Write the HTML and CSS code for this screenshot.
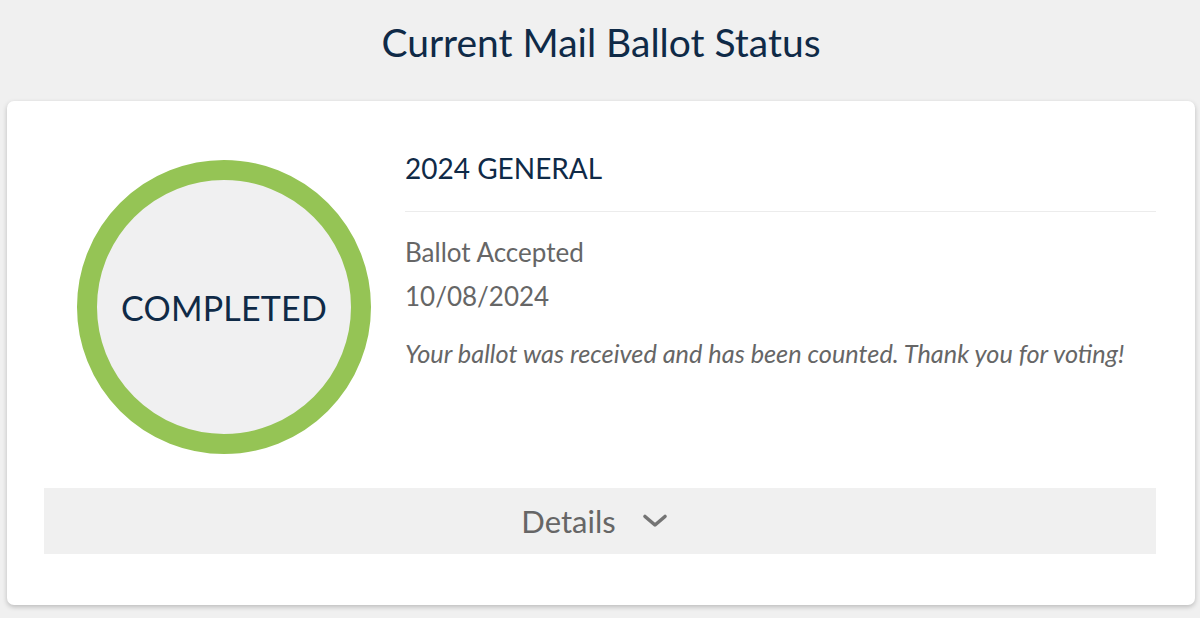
FILE: index.html
```html
<!DOCTYPE html>
<html lang="en">
<head>
<meta charset="utf-8">
<title>Current Mail Ballot Status</title>
<link rel="stylesheet" href="styles.css">
</head>
<body>
<main class="page">
  <h1 class="page-title">Current Mail Ballot Status</h1>
  <section class="card">
    <div class="status-row">
      <div class="status-ring">
        <span class="status-label">COMPLETED</span>
      </div>
      <div class="status-info">
        <h2 class="election-name">2024 GENERAL</h2>
        <hr class="divider">
        <p class="status-name">Ballot Accepted</p>
        <p class="status-date">10/08/2024</p>
        <p class="status-message">Your ballot was received and has been counted. Thank you for voting!</p>
      </div>
    </div>
    <button class="details-bar" type="button">
      <span class="details-text">Details</span>
      <svg class="chevron" width="28" height="16" viewBox="0 0 28 16" aria-hidden="true">
        <path d="M4 3.5 L14 12 L24 3.5" fill="none" stroke="#747474" stroke-width="3.6" stroke-linecap="round" stroke-linejoin="round"/>
      </svg>
    </button>
  </section>
</main>
</body>
</html>
```
FILE: styles.css
```css
html, body {
  margin: 0;
  padding: 0;
  background: #f0f0f0;
}
body {
  font-family: Lato, "Open Sans", "Liberation Sans", sans-serif;
  width: 1200px;
  height: 618px;
  overflow: hidden;
}
.page {
  display: flex;
  flex-direction: column;
  padding: 0 5px 0 7px;
}
.page-title {
  margin: 0;
  padding-top: 19px;
  height: 101px;
  box-sizing: border-box;
  text-align: center;
  font-size: 39px;
  font-weight: 400;
  line-height: 46px;
  color: #0f2a47;
}
.card {
  background: #fff;
  border-radius: 7px;
  box-shadow: 0 2px 5px rgba(0,0,0,0.22);
  padding: 0 39px 51px 37px;
  display: flex;
  flex-direction: column;
}
.status-row {
  display: flex;
  gap: 34px;
  padding: 50px 0 0 33px;
}
.status-ring {
  flex: none;
  width: 294px;
  height: 294px;
  margin-top: 9px;
  box-sizing: border-box;
  border: 20px solid #95c455;
  border-radius: 50%;
  background: #f0f0f1;
  display: flex;
  align-items: center;
  justify-content: center;
}
.status-label {
  font-size: 34px;
  color: #0f2a47;
  letter-spacing: 0.2px;
}
.status-info {
  flex: 1;
  display: flex;
  flex-direction: column;
}
.election-name {
  margin: 0;
  font-size: 28px;
  font-weight: 400;
  line-height: 34px;
  color: #0f2a47;
}
.divider {
  border: 0;
  border-top: 1px solid #ececec;
  margin: 26px 0 18px;
  width: 100%;
}
.status-name, .status-date, .status-message {
  margin: 0;
  font-size: 26px;
  line-height: 44px;
  color: #666;
}
.status-message {
  font-style: italic;
  font-size: 25.3px;
  margin-top: 13px;
}
.details-bar {
  margin-top: 34px;
  height: 66px;
  border: 0;
  background: #f0f0f0;
  display: flex;
  align-items: center;
  justify-content: center;
  gap: 25px;
  font-family: inherit;
  padding: 0 10px 0 0;
  cursor: pointer;
}
.details-text {
  font-size: 31px;
  color: #666;
}
.chevron {
  display: block;
}
```
